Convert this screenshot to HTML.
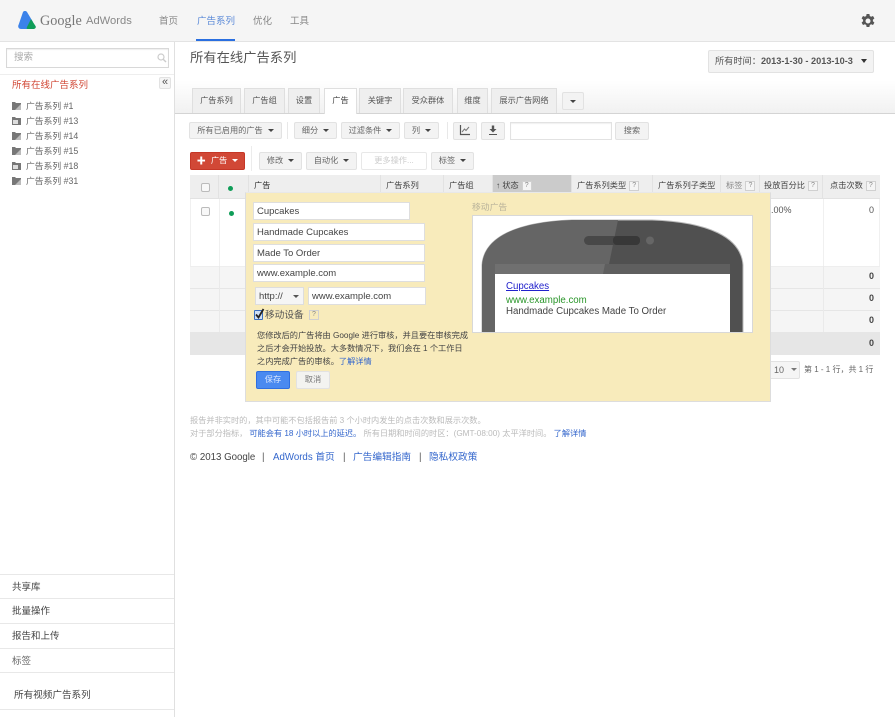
<!DOCTYPE html>
<html><head><meta charset="utf-8"><style>
html,body{margin:0;padding:0;background:#fff}
#p{position:relative;width:895px;height:717px;overflow:hidden;background:#fff;font-family:"Liberation Sans","Noto Sans CJK SC",sans-serif;font-size:9px;color:#555;filter:blur(.3px)}
.t{position:absolute;white-space:nowrap;line-height:12px}
.b{position:absolute;box-sizing:border-box}
.btn{position:absolute;box-sizing:border-box;background:#f3f3f3;border:1px solid #e2e2e2;border-radius:2px;text-align:center;color:#666;font-size:8.200px;white-space:nowrap}
.c::after{content:"";display:inline-block;margin-left:5px;border:3px solid transparent;border-top:3px solid #444;border-bottom:0;vertical-align:middle}
.w::after{border-top-color:#fff}
.tab{position:absolute;top:88px;height:25px;box-sizing:border-box;background:#efefef;border:1px solid #dfdfdf;border-bottom:0;text-align:center;line-height:24px;color:#555;font-size:8.200px}
.th{position:absolute;top:175px;height:24px;line-height:21px;font-size:8.200px;color:#444;white-space:nowrap;box-sizing:border-box;padding-left:5px;border-right:1px solid #e2e2e2}
.q{display:inline-block;width:8px;height:8px;line-height:8px;border:1px solid #d0d0d0;font-size:7px;text-align:center;color:#888;margin-left:3px;vertical-align:1px;background:#f5f5f5}
.in{position:absolute;box-sizing:border-box;background:#fff;border:1px solid #dedede;height:18px;line-height:17px;padding-left:3px;font-size:9.500px;color:#444;white-space:nowrap}
.ln{position:absolute;left:0;width:174px;height:1px;background:#e8e8e8}
a{color:#3366cc;text-decoration:none}
</style></head><body><div id="p">

<!-- Header -->
<div class="b" style="left:0;top:0;width:895px;height:42px;background:#f5f5f5;border-bottom:1px solid #e3e3e3"></div>
<svg class="b" style="left:18px;top:11px" width="18" height="18" viewBox="0 0 18 18"><path d="M5 1C6-.3 8-.3 9 1L15 11 9 18H3C.5 18-.5 15.500.7 13.500Z" fill="#3b82ea"/><path d="M13 8L17.500 15C18.500 16.500 17 18 15.500 18H9.500C8.500 18 8.500 17 9 16Z" fill="#0f9d58"/></svg>
<div class="t" style="left:40px;top:11px;font:14.200px/20px 'Liberation Serif',serif;color:#777">Google</div>
<div class="t" style="left:86px;top:14px;font-size:11.200px;line-height:14px;color:#888">AdWords</div>
<div class="t" style="left:159px;top:15.500px;font-size:9.500px;color:#888">首页</div>
<div class="t" style="left:197px;top:15.500px;font-size:9.500px;color:#5b8ad8">广告系列</div>
<div class="b" style="left:196px;top:39px;width:39px;height:2px;background:#2a6fe0"></div>
<div class="t" style="left:253px;top:15.500px;font-size:9.500px;color:#888">优化</div>
<div class="t" style="left:290px;top:15.500px;font-size:9.500px;color:#888">工具</div>
<svg class="b" style="left:861px;top:14px" width="14" height="14" viewBox="0 0 14 14"><path fill="#555" fill-rule="evenodd" d="M5.600 0h2.800l.4 2 1.300.7 1.900-.7 1.400 2.400-1.500 1.300v1.600l1.500 1.300-1.400 2.400-1.900-.7-1.300.7-.4 2H5.600l-.4-2-1.300-.7-1.900.7L.6 8.600l1.500-1.300V5.700L.6 4.400 2 2l1.900.7 1.300-.7zM7 4.500a2.500 2.500 0 1 0 0 5 2.500 2.500 0 0 0 0-5z"/></svg>

<!-- Sidebar -->
<div class="b" style="left:174px;top:42px;width:1px;height:675px;background:#e0e0e0"></div>
<div class="b" style="left:6px;top:48px;width:163px;height:20px;border:1px solid #d8d8d8;box-shadow:inset 0 1px 1px #eee;background:#fff"></div>
<div class="t" style="left:14px;top:52px;font-size:9.500px;color:#aaa">搜索</div>
<svg class="b" style="left:157px;top:53px" width="10" height="10" viewBox="0 0 10 10"><circle cx="4" cy="4" r="3" fill="none" stroke="#ccc" stroke-width="1.200"/><path d="M6.200 6.200L9 9" stroke="#ccc" stroke-width="1.400"/></svg>
<div class="ln" style="top:74px;background:#eee"></div>
<div class="t" style="left:12px;top:80px;font-size:9.500px;color:#d14836">所有在线广告系列</div>
<div class="btn" style="left:159px;top:77px;width:12px;height:12px;line-height:9px;font-size:11px;padding:0;background:#f5f5f5;color:#555">«</div>
<svg class="b" style="left:12px;top:101px" width="10" height="84" viewBox="0 0 10 84" fill="#777">
<path d="M0 1h3l1 1h5v7H0z"/><path d="M9 3L3 9h6z" fill="#bbb"/>
<path d="M0 16h3l1 1h5v7H0z"/><path d="M1 19h5v4H1z" fill="#ddd"/>
<path d="M0 31h3l1 1h5v7H0z"/><path d="M9 33L3 39h6z" fill="#bbb"/>
<path d="M0 46h3l1 1h5v7H0z"/><path d="M9 48L3 54h6z" fill="#bbb"/>
<path d="M0 61h3l1 1h5v7H0z"/><path d="M1 64h5v4H1z" fill="#ddd"/>
<path d="M0 76h3l1 1h5v7H0z"/><path d="M9 78L3 84h6z" fill="#bbb"/></svg>
<div class="t" style="left:26px;top:99.500px;color:#666;font-size:8.800px">广告系列 #1</div>
<div class="t" style="left:26px;top:114.500px;color:#666;font-size:8.800px">广告系列 #13</div>
<div class="t" style="left:26px;top:129.500px;color:#666;font-size:8.800px">广告系列 #14</div>
<div class="t" style="left:26px;top:144.500px;color:#666;font-size:8.800px">广告系列 #15</div>
<div class="t" style="left:26px;top:159.500px;color:#666;font-size:8.800px">广告系列 #18</div>
<div class="t" style="left:26px;top:174.500px;color:#666;font-size:8.800px">广告系列 #31</div>

<div class="ln" style="top:574px"></div><div class="ln" style="top:598px"></div><div class="ln" style="top:623px"></div><div class="ln" style="top:648px"></div><div class="ln" style="top:672px"></div><div class="ln" style="top:709px"></div>
<div class="t" style="left:12px;top:581.500px;color:#444;font-size:9.500px">共享库</div>
<div class="t" style="left:12px;top:606px;color:#444;font-size:9.500px">批量操作</div>
<div class="t" style="left:12px;top:631px;color:#444;font-size:9.500px">报告和上传</div>
<div class="t" style="left:12px;top:656px;color:#666;font-size:9.500px">标签</div>
<div class="t" style="left:14px;top:689.500px;color:#444;font-size:9.600px">所有视频广告系列</div>

<!-- Title & date -->
<div class="t" style="left:190px;top:51px;font-size:13.300px;line-height:14px;color:#555">所有在线广告系列</div>
<div class="btn" style="left:708px;top:50px;width:166px;height:23px;line-height:21px;text-align:left;padding-left:6px;font-size:9.200px;background:#f3f3f3;color:#555">所有时间：<b style="font-weight:700;color:#555">2013-1-30 - 2013-10-3</b></div>
<div class="b" style="left:861px;top:59px;border:3.500px solid transparent;border-top:4px solid #333;border-bottom:0"></div>

<!-- Tabs -->
<div class="b" style="left:175px;top:80px;width:720px;height:34px;background:linear-gradient(#fff,#f1f1f1);border-bottom:1px solid #d4d4d4"></div>
<div class="tab" style="left:192px;width:49px">广告系列</div>
<div class="tab" style="left:244px;width:41px">广告组</div>
<div class="tab" style="left:288px;width:32px">设置</div>
<div class="tab" style="left:324px;width:33px;height:26px;background:#fff;color:#444">广告</div>
<div class="tab" style="left:359px;width:42px">关键字</div>
<div class="tab" style="left:403px;width:50px">受众群体</div>
<div class="tab" style="left:457px;width:31px">维度</div>
<div class="tab" style="left:491px;width:66px">展示广告网络</div>
<div class="btn" style="left:562px;top:92px;width:22px;height:18px"></div>
<div class="b" style="left:570px;top:100px;border:3px solid transparent;border-top:3px solid #444;border-bottom:0"></div>

<!-- Toolbar 1 -->
<div class="btn c" style="left:189px;top:122px;width:93px;height:17px;line-height:15px">所有已启用的广告</div>
<div class="b" style="left:287px;top:122px;width:1px;height:17px;background:#e8e8e8"></div>
<div class="btn c" style="left:294px;top:122px;width:43px;height:17px;line-height:15px">细分</div>
<div class="btn c" style="left:341px;top:122px;width:59px;height:17px;line-height:15px">过滤条件</div>
<div class="btn c" style="left:404px;top:122px;width:35px;height:17px;line-height:15px">列</div>
<div class="b" style="left:447px;top:122px;width:1px;height:17px;background:#e8e8e8"></div>
<div class="btn" style="left:453px;top:122px;width:24px;height:18px"></div>
<svg class="b" style="left:459px;top:124px" width="12" height="12" viewBox="0 0 12 12"><path d="M1.500 1v9.500H11" fill="none" stroke="#555" stroke-width="1.200"/><path d="M3 8l2.500-3 1.500 1.500L10 3" fill="none" stroke="#777"/></svg>
<div class="btn" style="left:481px;top:122px;width:24px;height:18px"></div>
<svg class="b" style="left:487px;top:124px" width="12" height="12" viewBox="0 0 12 12"><path d="M4.800 1.500h2.400v3.500H9.500L6 8.500 2.500 5h2.300zM2 10h8v1H2z" fill="#555"/></svg>
<div class="b" style="left:510px;top:122px;width:102px;height:18px;border:1px solid #e2e2e2;box-shadow:inset 0 1px 1px #f0f0f0;background:#fff"></div>
<div class="btn" style="left:615px;top:122px;width:34px;height:18px;line-height:16px">搜索</div>

<!-- Toolbar 2 -->
<div class="btn c w" style="left:190px;top:152px;width:55px;height:18px;line-height:16px;background:#d14836;border-color:#c53727;color:#fff"><span style="display:inline-block;font-weight:700;font-size:9px;margin-right:5px;line-height:10px;vertical-align:-1px">✚</span>广告</div>
<div class="b" style="left:251px;top:146px;width:1px;height:25px;background:#ececec"></div>
<div class="btn c" style="left:259px;top:152px;width:43px;height:18px;line-height:16px">修改</div>
<div class="btn c" style="left:306px;top:152px;width:51px;height:18px;line-height:16px">自动化</div>
<div class="btn" style="left:361px;top:152px;width:66px;height:18px;line-height:16px;background:#fff;color:#ccc;border-color:#e8e8e8">更多操作...</div>
<div class="btn c" style="left:431px;top:152px;width:43px;height:18px;line-height:16px">标签</div>

<!-- Table -->
<div class="b" style="left:190px;top:175px;width:690px;height:180px;background:#fff;border-left:1px solid #f0f0f0;border-right:1px solid #f0f0f0"></div>
<div class="b" style="left:190px;top:175px;width:690px;height:24px;background:#eeeeee;border-bottom:1px solid #e2e2e2"></div>
<div class="th" style="left:190px;width:29px"></div>
<div class="th" style="left:219px;width:30px"></div>
<div class="th" style="left:249px;width:132px;color:#333">广告</div>
<div class="th" style="left:381px;width:63px">广告系列</div>
<div class="th" style="left:444px;width:49px">广告组</div>
<div class="th" style="left:493px;width:79px;background:#cbcbcb;padding-left:3px"><b>↑</b> 状态<span class="q">?</span></div>
<div class="th" style="left:572px;width:81px">广告系列类型<span class="q">?</span></div>
<div class="th" style="left:653px;width:68px">广告系列子类型</div>
<div class="th" style="left:721px;width:39px;color:#888">标签<span class="q">?</span></div>
<div class="th" style="left:760px;width:63px;padding-left:4px">投放百分比<span class="q">?</span></div>
<div class="th" style="left:823px;width:57px;border:0;padding-left:7px">点击次数<span class="q">?</span></div>
<div class="b" style="left:201px;top:183px;width:9px;height:9px;border:1px solid #bbb;border-radius:2px;background:#f8f8f8"></div>
<div class="b" style="left:228px;top:186px;width:5px;height:5px;border-radius:50%;background:#0f9d58"></div>
<div class="b" style="left:201px;top:207px;width:9px;height:9px;border:1px solid #bbb;border-radius:2px;background:#f8f8f8"></div>
<div class="b" style="left:229px;top:211px;width:5px;height:5px;border-radius:50%;background:#0f9d58"></div>
<div class="b" style="left:219px;top:199px;width:1px;height:133px;background:#f0f0f0"></div>
<div class="b" style="left:823px;top:199px;width:1px;height:133px;background:#f0f0f0"></div>
<div class="b" style="left:190px;top:266px;width:690px;height:66px;background:#f5f5f5;border-top:1px solid #eee"></div>
<div class="b" style="left:190px;top:288px;width:690px;height:1px;background:#e6e6e6"></div>
<div class="b" style="left:190px;top:310px;width:690px;height:1px;background:#e6e6e6"></div>
<div class="b" style="left:219px;top:266px;width:1px;height:66px;background:#eaeaea"></div>
<div class="b" style="left:823px;top:266px;width:1px;height:66px;background:#eaeaea"></div>
<div class="b" style="left:190px;top:332px;width:690px;height:23px;background:#e6e6e6"></div>
<div class="t" style="left:771px;top:204px;color:#555;font-size:9px">.00%</div>
<div class="t" style="left:869px;top:204px;color:#555;font-size:9px">0</div>
<div class="t" style="left:869px;top:270px;color:#444;font-size:9px;font-weight:700">0</div>
<div class="t" style="left:869px;top:292px;color:#444;font-size:9px;font-weight:700">0</div>
<div class="t" style="left:869px;top:314px;color:#444;font-size:9px;font-weight:700">0</div>
<div class="t" style="left:869px;top:337px;color:#444;font-size:9px;font-weight:700">0</div>

<!-- Pager -->
<div class="btn" style="left:766px;top:361px;width:34px;height:18px;background:#f5f5f5"></div>
<div class="t" style="left:774px;top:364px;color:#666">10</div>
<div class="b" style="left:791px;top:368px;border:3px solid transparent;border-top:3px solid #777;border-bottom:0"></div>
<div class="t" style="left:804px;top:364px;color:#666;font-size:8px">第 1 - 1 行，共 1 行</div>

<!-- Popup -->
<div class="b" style="left:245px;top:192px;width:526px;height:210px;background:#f8ebbb;border:1px solid #ddd;border-top-color:#e8e8e8"></div>
<div class="in" style="left:253px;top:202px;width:157px">Cupcakes</div>
<div class="in" style="left:253px;top:223px;width:172px">Handmade Cupcakes</div>
<div class="in" style="left:253px;top:244px;width:172px">Made To Order</div>
<div class="in" style="left:253px;top:264px;width:172px">www.example.com</div>
<div class="in" style="left:255px;top:287px;width:49px;background:#f5f5f5;border-color:#ddd">http://</div>
<div class="b" style="left:293px;top:295px;border:3px solid transparent;border-top:3px solid #555;border-bottom:0"></div>
<div class="in" style="left:308px;top:287px;width:118px;padding-left:3px">www.example.com</div>
<div class="b" style="left:254px;top:310px;width:9px;height:10px;background:#cfe0f5;border:1px solid #3a6fc0;border-radius:1px"></div>
<svg class="b" style="left:254px;top:308px" width="11" height="12" viewBox="0 0 11 12"><path d="M2 6.500l2.500 3L9.500 1" fill="none" stroke="#222" stroke-width="1.800"/></svg>
<div class="t" style="left:265px;top:310px;font-size:9.700px;color:#555">移动设备</div>
<div class="q" style="position:absolute;left:309px;top:310px;width:8px;height:8px;background:#f8ebbb;margin:0">?</div>
<div class="t" style="left:257px;top:330px;font-size:8.200px;color:#444">您修改后的广告将由 Google 进行审核，并且要在审核完成</div>
<div class="t" style="left:257px;top:343px;font-size:8.200px;color:#444">之后才会开始投放。大多数情况下，我们会在 1 个工作日</div>
<div class="t" style="left:257px;top:356px;font-size:8.200px;color:#444">之内完成广告的审核。<a>了解详情</a></div>
<div class="btn" style="left:256px;top:371px;width:34px;height:18px;line-height:16px;background:#4a8af0;border-color:#2f6fe0;color:#dbe8ff">保存</div>
<div class="btn" style="left:296px;top:371px;width:34px;height:18px;line-height:16px;background:#f3f3f0;color:#777">取消</div>

<div class="t" style="left:472px;top:201px;color:#b8b29a;font-size:8.800px">移动广告</div>
<div class="b" style="left:472px;top:215px;width:281px;height:118px;background:#fff;border:1px solid #d8d8d8;overflow:hidden">
<svg style="position:absolute;left:-1px;top:-1px" width="281" height="118" viewBox="0 0 281 118">
<path d="M10 118V50C12 22 45 7 100 5H180C236 7 269 22 271 50V118Z" fill="#505050" stroke="#bbb" stroke-width="1"/>
<path d="M10 118V50C12 22 45 7 100 5H146L123 118Z" fill="#656565"/>
<rect x="23" y="49" width="235" height="10" fill="#707070"/>
<path d="M133 49H258V59H131Z" fill="#5f5f5f"/>
<rect x="112" y="21" width="56" height="9" rx="4.500" fill="#484848"/>
<rect x="141" y="21" width="27" height="9" rx="4" fill="#383838"/>
<circle cx="178" cy="25.500" r="4" fill="#666"/>
<rect x="23" y="59" width="235" height="59" fill="#fff"/>
</svg></div>
<div class="t" style="left:506px;top:281px;font-size:9.700px;color:#2222cc;text-decoration:underline">Cupcakes</div>
<div class="t" style="left:506px;top:295px;font-size:9.700px;color:#2a962a">www.example.com</div>
<div class="t" style="left:506px;top:306px;font-size:9.700px;color:#444">Handmade Cupcakes Made To Order</div>

<!-- Footer -->
<div class="t" style="left:190px;top:415px;font-size:8.200px;color:#bbb">报告并非实时的，其中可能不包括报告前 3 个小时内发生的点击次数和展示次数。</div>
<div class="t" style="left:190px;top:428px;font-size:8.200px;color:#bbb">对于部分指标，<a style="margin-left:2px">可能会有 18 小时以上的延迟。</a> 所有日期和时间的时区：(GMT-08:00) 太平洋时间。 <a>了解详情</a></div>
<div class="t" style="left:190px;top:451.500px;font-size:9.700px;color:#444">© 2013 Google</div>
<div class="t" style="left:262px;top:451.500px;font-size:9.700px;color:#555">|</div>
<div class="t" style="left:273px;top:451.500px;font-size:9.700px"><a>AdWords 首页</a></div>
<div class="t" style="left:343px;top:451.500px;font-size:9.700px;color:#555">|</div>
<div class="t" style="left:353px;top:451.500px;font-size:9.700px"><a>广告编辑指南</a></div>
<div class="t" style="left:419px;top:451.500px;font-size:9.700px;color:#555">|</div>
<div class="t" style="left:429px;top:451.500px;font-size:9.700px"><a>隐私权政策</a></div>
</div></body></html>
